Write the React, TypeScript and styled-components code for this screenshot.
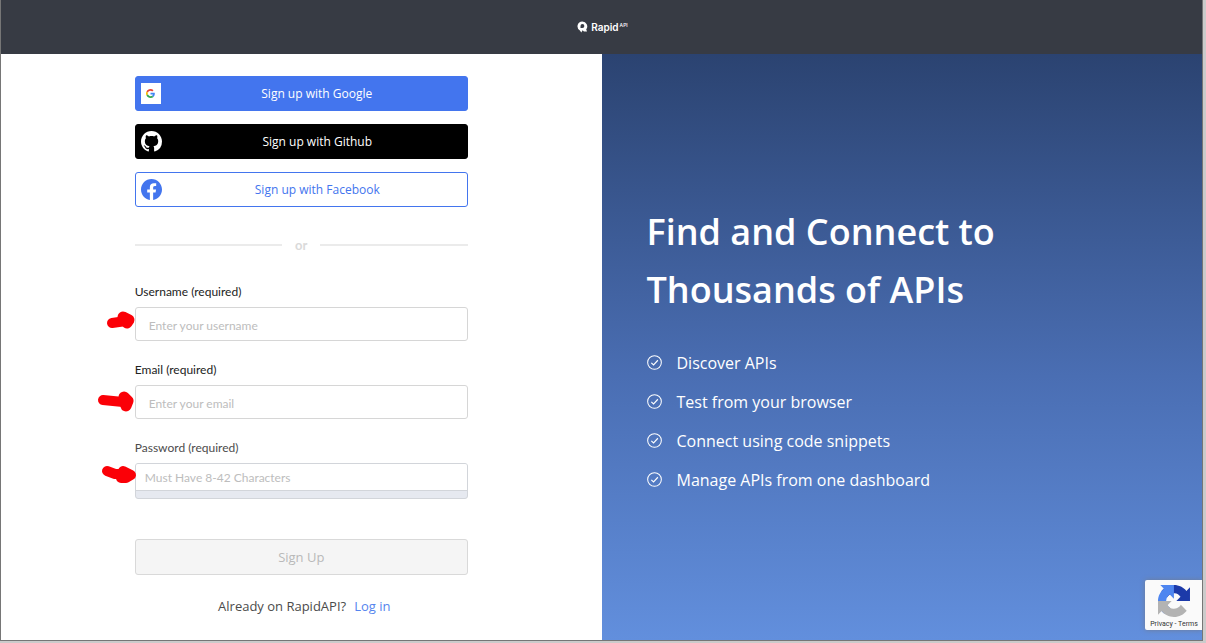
import React from "react";
import styled, { createGlobalStyle } from "styled-components";

const GlobalStyle = createGlobalStyle`
  *, *::before, *::after { box-sizing: border-box; }
  html, body, #root { height: 100%; }
  body {
    margin: 0;
    background: #cbcbcb;
    font-family: "Open Sans", "Noto Sans", sans-serif;
  }
  #root { display: flex; flex-direction: column; padding: 0 3px 2px 0; }
`;

const Frame = styled.div`
  position: relative;
  flex: 1 0 auto;
  display: flex;
  flex-direction: column;
  border: 1px solid #767676;
  border-top: 0;
  background: #fff;
  overflow: hidden;
`;

const Header = styled.header`
  display: flex;
  align-items: center;
  justify-content: center;
  height: 54px;
  background: #373b44;
  color: #fff;
`;

const Logo = styled.a`
  display: flex;
  align-items: center;
  gap: 3px;
  padding-left: 2px;
  color: #fff;
  font: 600 10px/12px Inter, sans-serif;
  text-decoration: none;

  sup {
    margin-left: 1px;
    font-size: 5px;
    font-weight: 500;
    line-height: 4px;
    vertical-align: 4px;
  }
`;

const Columns = styled.main`
  flex: 1;
  display: grid;
  grid-template-columns: 1fr 1fr;
`;

const FormPanel = styled.section`
  display: flex;
  justify-content: center;
  padding: 22px 24px 16px;
`;

const Form = styled.form`
  display: flex;
  flex-direction: column;
  width: 100%;
  max-width: 333px;
`;

const Providers = styled.div`
  display: flex;
  flex-direction: column;
  gap: 13px;
`;

const ProviderButton = styled.button<{ $bg: string; $fg: string; $line: string }>`
  display: flex;
  align-items: center;
  height: 35px;
  padding: 0 5px;
  border: 1px solid ${(p) => p.$line};
  border-radius: 3px;
  background: ${(p) => p.$bg};
  color: ${(p) => p.$fg};
  font: 400 12px/18px "Open Sans", sans-serif;
  cursor: pointer;

  span { flex: 1; padding-left: 11px; }
`;

const GoogleTile = styled.i`
  display: flex;
  align-items: center;
  justify-content: center;
  width: 20px;
  height: 21px;
  background: #fff;
`;

const Divider = styled.div`
  display: flex;
  align-items: center;
  gap: 13px;
  margin: 28px 0;
  color: #dadada;
  font: 700 13px/20px Lato, sans-serif;

  &::before, &::after {
    content: "";
    flex: 1;
    height: 2px;
    background: #ebebeb;
  }
`;

const Field = styled.div`
  position: relative;
  display: flex;
  flex-direction: column;
  gap: 6px;
  margin-bottom: 20px;
`;

const Label = styled.label<{ $soft?: boolean }>`
  color: ${(p) => (p.$soft ? "#4c4c4c" : "#222")};
  font: 400 12px/18px Lato, sans-serif;
`;

const Input = styled.input`
  width: 100%;
  height: 34px;
  padding: 2px 13px 0;
  border: 1px solid #d6d6d6;
  border-radius: 3px;
  background: #fff;
  color: #333;
  font: 400 12px/18px Lato, sans-serif;

  &::placeholder { color: #bdbdbd; opacity: 1; }
`;

const PasswordBox = styled.div`
  border: 1px solid #d2d5da;
  border-radius: 3px;
  background: #e6e9f0;
  overflow: hidden;
`;

const PasswordInput = styled(Input)`
  display: block;
  height: 26px;
  padding: 0 9px;
  border: 0;
  border-radius: 0;
`;

const Strength = styled.div`
  height: 8px;
  border-top: 1px solid #d2d5da;
`;

const Marker = styled.svg`
  position: absolute;
  right: 100%;
  bottom: 0;
  width: 40px;
  height: 34px;
  overflow: visible;
  fill: none;
  stroke: #fb0007;
  stroke-linecap: round;
  stroke-linejoin: round;
`;

const SubmitButton = styled.button`
  height: 36px;
  margin-top: 20px;
  border: 1px solid #d9d9d9;
  border-radius: 3px;
  background: #f5f5f5;
  color: #b9b9b9;
  font: 400 13px/20px "Open Sans", sans-serif;
`;

const LoginLine = styled.p`
  display: flex;
  justify-content: center;
  gap: 8px;
  margin: 21px 0 0;
  padding-left: 6px;
  color: #4b4b4b;
  font-size: 13px;
  line-height: 20px;

  a { color: #5585ee; text-decoration: none; }
`;

const Promo = styled.section`
  display: flex;
  flex-direction: column;
  justify-content: center;
  padding: 0 45px;
  background: linear-gradient(180deg, #2b4371 0%, #4a6eb3 55%, #628fdd 100%);
  color: #fff;
`;

const Title = styled.h1`
  max-width: 400px;
  margin: 0 0 32px;
  font-size: 36px;
  font-weight: 600;
  line-height: 58px;
`;

const Benefits = styled.ul`
  display: flex;
  flex-direction: column;
  gap: 15px;
  margin: 0;
  padding: 0;
  list-style: none;
  font-size: 16px;
  line-height: 24px;

  li { display: flex; align-items: center; gap: 15px; }
`;

const Captcha = styled.aside`
  position: absolute;
  right: 0;
  bottom: 10px;
  display: flex;
  flex-direction: column;
  align-items: center;
  gap: 2px;
  width: 57px;
  height: 50px;
  padding: 5px 0 0 1px;
  border-radius: 2px 0 0 2px;
  background: #fafafa;
  box-shadow: 0 0 5px #707c92;
  color: #333;
  font: 400 7px/10px Roboto, sans-serif;

  div { white-space: nowrap; }
  a { color: inherit; text-decoration: none; }
`;

const CheckIcon = () => (
  <svg width="15" height="15" viewBox="0 0 16 16" fill="none" stroke="#fff" aria-hidden="true">
    <circle cx="8" cy="8" r="7.300" strokeWidth="1.100" />
    <path d="M4.600 8.400 7 10.600 11.600 5.600" strokeWidth="1.200" />
  </svg>
);

const benefits = [
  "Discover APIs",
  "Test from your browser",
  "Connect using code snippets",
  "Manage APIs from one dashboard",
];

export default function App() {
  return (
    <>
      <GlobalStyle />
      <Frame>
        <Header>
          <Logo href="#">
            <svg width="11" height="12" viewBox="0 0 11 12" aria-hidden="true">
              <path
                fill="#fff"
                fillRule="evenodd"
                d="M5.300.400a4.900 4.900 0 0 1 3.900 7.900l.800 2.200H6.900L5.600 9.200 4.300 11.600 2.900 9.500A4.900 4.900 0 0 1 5.300.400ZM5.400 3.100a2 2 0 0 0-1.900 2v1.900h1.900a1.950 1.950 0 0 0 0-3.900Z"
              />
            </svg>
            <span>
              Rapid<sup>API</sup>
            </span>
          </Logo>
        </Header>
        <Columns>
          <FormPanel>
            <Form onSubmit={(e) => e.preventDefault()}>
              <Providers>
                <ProviderButton type="button" $bg="#4375ee" $fg="#fff" $line="#4375ee">
                  <GoogleTile>
                    <svg width="9" height="9" viewBox="0 0 48 48" aria-hidden="true">
                      <path fill="#EA4335" d="M24 9.500c3.500 0 6.700 1.200 9.200 3.600l6.900-6.900C35.900 2.400 30.500 0 24 0 14.600 0 6.500 5.400 2.600 13.200l8 6.200C12.400 13.700 17.700 9.500 24 9.500z" />
                      <path fill="#4285F4" d="M47 24.500c0-1.600-.2-3.100-.4-4.500H24v9h12.900c-.6 3-2.300 5.500-4.800 7.200l7.700 6C44.400 38 47 31.800 47 24.500z" />
                      <path fill="#FBBC05" d="M10.500 28.600A14.500 14.500 0 0 1 10.500 19.400l-8-6.200a24 24 0 0 0 0 21.600z" />
                      <path fill="#34A853" d="M24 48c6.500 0 11.900-2.100 15.900-5.800l-7.700-6c-2.200 1.500-4.900 2.300-8.200 2.300-6.300 0-11.600-4.200-13.500-9.900l-8 6.200C6.500 42.600 14.600 48 24 48z" />
                    </svg>
                  </GoogleTile>
                  <span>Sign up with Google</span>
                </ProviderButton>
                <ProviderButton type="button" $bg="#000" $fg="#fff" $line="#000">
                  <svg width="21" height="21" viewBox="0 0 16 16" fill="#fff" aria-hidden="true">
                    <path d="M8 0C3.580 0 0 3.580 0 8c0 3.540 2.290 6.530 5.470 7.590.4.070.550-.170.550-.380 0-.190-.010-.820-.010-1.490-2.010.370-2.530-.490-2.690-.940-.090-.230-.480-.940-.820-1.130-.280-.150-.680-.520-.010-.530.630-.010 1.080.580 1.230.820.720 1.210 1.870.870 2.330.660.070-.520.280-.870.510-1.070-1.780-.2-3.640-.890-3.640-3.950 0-.870.310-1.590.820-2.150-.080-.2-.360-1.020.080-2.120 0 0 .670-.210 2.200.820.640-.180 1.320-.270 2-.270s1.360.090 2 .270c1.530-1.040 2.200-.820 2.200-.820.440 1.100.160 1.920.080 2.120.510.560.820 1.270.820 2.150 0 3.070-1.870 3.750-3.650 3.950.290.250.540.730.540 1.480 0 1.070-.010 1.930-.010 2.200 0 .210.150.460.550.380A8.010 8.010 0 0 0 16 8c0-4.420-3.580-8-8-8z" />
                  </svg>
                  <span>Sign up with Github</span>
                </ProviderButton>
                <ProviderButton type="button" $bg="#fff" $fg="#4375ee" $line="#4375ee">
                  <svg width="21" height="21" viewBox="0 0 24 24" fill="#4375ee" aria-hidden="true">
                    <path d="M24 12.073C24 5.405 18.627 0 12 0S0 5.405 0 12.073c0 6.026 4.388 11.020 10.125 11.927v-8.437H7.078v-3.490h3.047V9.413c0-3.026 1.792-4.697 4.533-4.697 1.312 0 2.686.236 2.686.236v2.971h-1.513c-1.491 0-1.956.931-1.956 1.886v2.264h3.328l-.532 3.490h-2.796V24C19.612 23.093 24 18.099 24 12.073z" />
                  </svg>
                  <span>Sign up with Facebook</span>
                </ProviderButton>
              </Providers>

              <Divider>or</Divider>

              <Field>
                <Label htmlFor="username">Username (required)</Label>
                <Input id="username" placeholder="Enter your username" />
                <Marker viewBox="0 0 40 34" aria-hidden="true">
                  <path d="M17 16 L31 14" strokeWidth="10" />
                  <path d="M28 10 L34 13 L32 16 Z" strokeWidth="11" />
                </Marker>
              </Field>
              <Field>
                <Label htmlFor="email">Email (required)</Label>
                <Input id="email" type="email" placeholder="Enter your email" />
                <Marker viewBox="0 0 40 34" aria-hidden="true">
                  <path d="M8 15 L28 17" strokeWidth="10" />
                  <path d="M29 12 L33 16 L31 21 Z" strokeWidth="11" />
                </Marker>
              </Field>
              <Field>
                <Label htmlFor="password" $soft>Password (required)</Label>
                <PasswordBox>
                  <PasswordInput id="password" type="password" placeholder="Must Have 8-42 Characters" />
                  <Strength />
                </PasswordBox>
                <Marker viewBox="0 0 40 34" aria-hidden="true">
                  <path d="M12 6 L20 9 L29 9" strokeWidth="10" />
                  <path d="M28 6 L36 10 L31 13 L26 13 Z" strokeWidth="10" />
                </Marker>
              </Field>

              <SubmitButton type="submit" disabled>Sign Up</SubmitButton>
              <LoginLine>
                Already on RapidAPI? <a href="#login">Log in</a>
              </LoginLine>
            </Form>
          </FormPanel>
          <Promo>
            <Title>Find and Connect to Thousands of APIs</Title>
            <Benefits>
              {benefits.map((text) => (
                <li key={text}>
                  <CheckIcon />
                  {text}
                </li>
              ))}
            </Benefits>
          </Promo>
        </Columns>
        <Captcha>
          <svg width="32" height="32" viewBox="0 0 64 64" aria-hidden="true">
            <path fill="#1c3aa9" d="M64 31.955l-.033-1.370V4.687l-7.160 7.160C50.948 4.674 42.033.093 32.050.093c-10.400 0-19.622 4.960-25.458 12.640l11.736 11.860a15.550 15.550 0 0 1 4.754-5.334c2.050-1.600 4.952-2.906 8.968-2.906.485 0 .860.057 1.135.163 4.976.393 9.288 3.140 11.828 7.124l-8.307 8.307L64 31.953z" />
            <path fill="#4e86f0" d="M31.862.094l-1.370.033H4.594l7.160 7.160C4.580 13.147 0 22.060 0 32.046c0 10.400 4.960 19.622 12.640 25.458L24.500 45.768a15.550 15.550 0 0 1-5.334-4.754c-1.600-2.050-2.906-4.952-2.906-8.968 0-.485.057-.860.163-1.135.393-4.976 3.140-9.288 7.124-11.828l8.307 8.307L31.860.095z" />
            <path fill="#b3b3b3" d="M.001 32.045l.033 1.370v25.898l7.160-7.160c5.860 7.173 14.774 11.754 24.760 11.754 10.400 0 19.622-4.960 25.458-12.640l-11.736-11.860a15.550 15.550 0 0 1-4.754 5.334c-2.050 1.600-4.952 2.906-8.968 2.906-.485 0-.860-.057-1.135-.163-4.976-.393-9.288-3.140-11.828-7.124l8.307-8.307c-10.522.040-22.400.066-27.295-.005z" />
          </svg>
          <div>
            <a href="#privacy">Privacy</a> - <a href="#terms">Terms</a>
          </div>
        </Captcha>
      </Frame>
    </>
  );
}
